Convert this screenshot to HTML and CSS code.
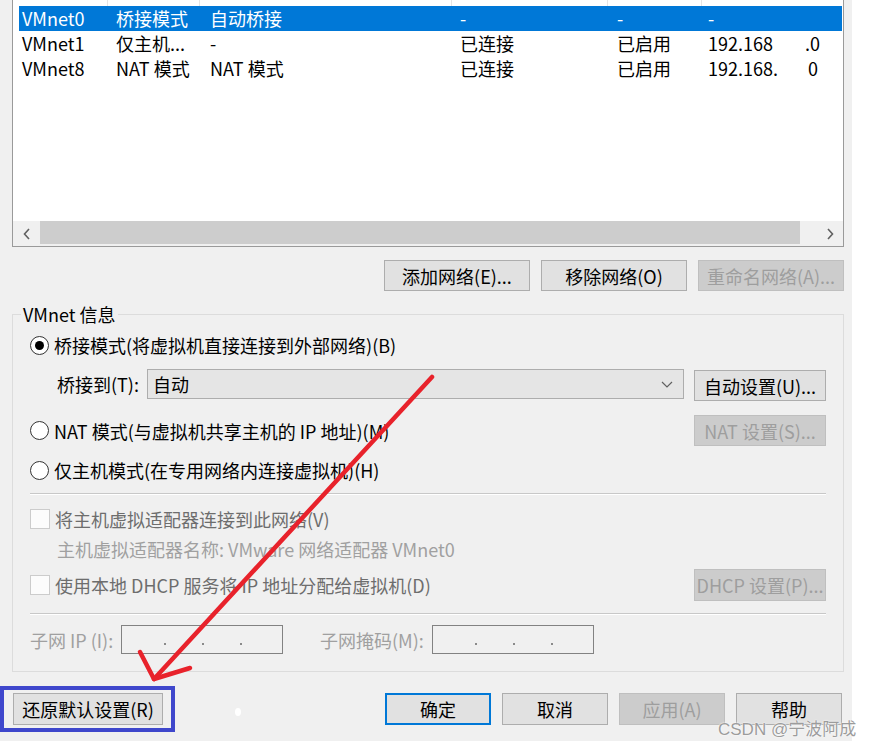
FILE: index.html
```html
<!DOCTYPE html>
<html lang="zh-CN">
<head>
  <meta charset="UTF-8">
  <title>虚拟网络编辑器</title>
  <link rel="stylesheet" href="styles.css">
</head>
<body>
<div class="page">
  <div class="dialog">

    <div class="list">
      <div class="list-head"><span></span><span></span><span></span><span></span><span></span><span></span></div>
      <div class="list-body">
        <div class="row sel"><span>VMnet0</span><span>桥接模式</span><span>自动桥接</span><span>-</span><span>-</span><span>-</span></div>
        <div class="row"><span>VMnet1</span><span>仅主机...</span><span>-</span><span>已连接</span><span>已启用</span><span>192.168<i class="ip-end">.0</i></span></div>
        <div class="row"><span>VMnet8</span><span>NAT 模式</span><span>NAT 模式</span><span>已连接</span><span>已启用</span><span>192.168.<i class="ip-end2">0</i></span></div>
      </div>
      <div class="hscroll">
        <span class="sb-arrow">
          <svg width="8" height="12" viewBox="0 0 8 12"><path d="M6 1 L1.5 6 L6 11" fill="none" stroke="#606060" stroke-width="1.6"/></svg>
        </span>
        <span class="sb-thumb"></span>
        <span class="sb-track"></span>
        <span class="sb-arrow">
          <svg width="8" height="12" viewBox="0 0 8 12"><path d="M2 1 L6.5 6 L2 11" fill="none" stroke="#606060" stroke-width="1.6"/></svg>
        </span>
      </div>
    </div>

    <div class="list-actions">
      <button class="btn wide">添加网络(E)...</button>
      <button class="btn wide">移除网络(O)</button>
      <button class="btn wide" disabled>重命名网络(A)...</button>
    </div>

    <fieldset class="group">
      <legend>VMnet 信息</legend>
      <div class="group-body">
        <div class="opt">
          <span class="radio on"></span>
          <span>桥接模式(将虚拟机直接连接到外部网络)(B)</span>
        </div>

        <div class="bridge">
          <span class="bridge-label">桥接到(T):</span>
          <div class="combo">
            <span>自动</span>
            <svg width="12" height="7" viewBox="0 0 12 7"><path d="M1 1 L6 6 L11 1" fill="none" stroke="#606060" stroke-width="1.2"/></svg>
          </div>
          <button class="btn side">自动设置(U)...</button>
        </div>

        <div class="opt nat">
          <span class="radio"></span>
          <span>NAT 模式(与虚拟机共享主机的 IP 地址)(M)</span>
          <button class="btn side push" disabled>NAT 设置(S)...</button>
        </div>

        <div class="opt host">
          <span class="radio"></span>
          <span>仅主机模式(在专用网络内连接虚拟机)(H)</span>
        </div>

        <div class="sep"></div>

        <div class="check">
          <span class="box"></span>
          <span>将主机虚拟适配器连接到此网络(V)</span>
        </div>
        <div class="adapter">主机虚拟适配器名称: VMware 网络适配器 VMnet0</div>

        <div class="check dhcp">
          <span class="box"></span>
          <span>使用本地 DHCP 服务将 IP 地址分配给虚拟机(D)</span>
          <button class="btn side push tall" disabled>DHCP 设置(P)...</button>
        </div>

        <div class="sep sep-low"></div>

        <div class="subnet">
          <span class="subnet-label">子网 IP (I):</span>
          <span class="ipbox"><i></i><i></i><i></i></span>
          <span class="subnet-label mask">子网掩码(M):</span>
          <span class="ipbox"><i></i><i></i><i></i></span>
        </div>
      </div>
    </fieldset>

    <div class="footer">
      <div class="mark">
        <button class="btn reset">还原默认设置(R)</button>
      </div>
      <div class="footer-right">
        <button class="btn foot default">确定</button>
        <button class="btn foot">取消</button>
        <button class="btn foot" disabled>应用(A)</button>
        <button class="btn foot">帮助</button>
      </div>
    </div>
  </div>

  <!-- red arrow drawn over the screenshot -->
  <svg class="annot" width="870" height="748" viewBox="0 0 870 748">
    <g fill="none" stroke="#e8222b" stroke-width="4.5" stroke-linecap="round" stroke-linejoin="round">
      <path d="M432 377 L154 679"/>
      <path d="M140 652 L154 679 L190 668"/>
    </g>
    <ellipse cx="238" cy="712" rx="3" ry="4" fill="#fff"/>
  </svg>

  <div class="watermark">CSDN @宁波阿成</div>
</div>
</body>
</html>
```

FILE: styles.css
```css
body {
  margin: 0;
  background: #fff;
  font-family: "Noto Sans CJK SC", sans-serif;
  font-size: 18px;
  color: #000;
}

.page {
  position: relative;
  width: 870px;
  height: 748px;
  overflow: hidden;
}

.dialog {
  width: 852px;
  height: 741px;
  background: #f0f0f0;
}

/* network list */
.list {
  margin: 0 8px 0 12px;
  background: #fff;
  border: 1px solid #9a9a9a;
  border-top: none;
}

.list-head,
.row {
  display: grid;
  grid-template-columns: 95px 92px 252px 156px 94px 1fr;
}

.list-head {
  height: 6px;
}

.list-head span {
  border-right: 1px solid #e5e5e5;
}

.list-head span:last-child {
  border-right: none;
}

.list-body {
  height: 215px;
}

.row {
  height: 25px;
  line-height: 25px;
  margin: 0 1px 0 6px;
  grid-template-columns: 89px 92px 252px 156px 94px 1fr;
  white-space: nowrap;
}

.row.sel {
  background: #0078d7;
  color: #fff;
}

.row span:nth-child(1) { padding-left: 3px; }
.row span:nth-child(2) { padding-left: 8px; }
.row span:nth-child(3) { padding-left: 10px; }
.row span:nth-child(4) { padding-left: 8px; }
.row span:nth-child(5) { padding-left: 9px; }
.row span:nth-child(6) { padding-left: 6px; }

.ip-end, .ip-end2 {
  font-style: normal;
}

.ip-end { margin-left: 32px; }
.ip-end2 { margin-left: 30px; }

.hscroll {
  display: flex;
  height: 25px;
  background: #f0f0f0;
}

.sb-arrow {
  width: 27px;
  display: flex;
  align-items: center;
  justify-content: center;
}

.sb-thumb {
  width: 760px;
  background: #cdcdcd;
  margin-bottom: 2px;
}

.sb-track {
  flex: 1;
}

/* buttons */
.btn {
  font: inherit;
  color: #000;
  background: #e1e1e1;
  border: 1px solid #adadad;
  padding: 0;
  height: 31px;
  line-height: 1;
  white-space: nowrap;
}

.btn:disabled {
  background: #cccccc;
  border-color: #bfbfbf;
  color: #9e9e9e;
}

.list-actions {
  display: flex;
  justify-content: flex-end;
  gap: 11px;
  margin: 13px 8px 0 12px;
}

.btn.wide {
  width: 146px;
}

/* VMnet info group */
.group {
  margin: 12px 8px 0 12px;
  padding: 0;
  border: 1px solid #dcdcdc;
  min-width: 0;
}

.group legend {
  margin-left: 8px;
  padding: 0 2px;
  line-height: 22px;
}

.group-body {
  padding: 6px 17px 17px 17px;
}

.opt, .check {
  display: flex;
  align-items: center;
  gap: 5px;
  height: 28px;
}

.radio {
  width: 17px;
  height: 17px;
  border: 1px solid #333;
  border-radius: 50%;
  background: #fff;
  display: flex;
  align-items: center;
  justify-content: center;
  flex: none;
}

.radio.on::after {
  content: "";
  width: 9px;
  height: 9px;
  border-radius: 50%;
  background: #000;
}

.bridge {
  display: flex;
  align-items: flex-start;
  margin-top: 10px;
  height: 32px;
}

.bridge-label {
  margin-left: 27px;
  width: 90px;
  line-height: 30px;
}

.combo {
  flex: 1;
  height: 28px;
  background: #e5e5e5;
  border: 1px solid #adadad;
  display: flex;
  align-items: center;
  justify-content: space-between;
  padding: 0 10px 0 5px;
}

.btn.side {
  width: 132px;
  margin-left: 10px;
  margin-top: 1px;
}

.opt.nat {
  height: 31px;
  margin-top: 14px;
}

.btn.push {
  margin-left: auto;
  margin-top: 0;
}

.opt.host {
  margin-top: 10px;
}

.sep {
  margin-top: 9px;
  border-top: 1px solid #c8c8c8;
  border-bottom: 1px solid #fff;
}

.check {
  margin-top: 10px;
  color: #6d6d6d;
}

.box {
  width: 18px;
  height: 18px;
  border: 1px solid #cccccc;
  background: #fcfcfc;
  flex: none;
}

.adapter {
  margin: 4px 0 0 27px;
  line-height: 24px;
  color: #a0a0a0;
}

.check.dhcp {
  height: 32px;
  margin-top: 8px;
}

.btn.tall {
  height: 32px;
}

.sep-low {
  margin-top: 12px;
}

.subnet {
  display: flex;
  align-items: center;
  margin-top: 10px;
  color: #a0a0a0;
}

.subnet-label {
  width: 91px;
}

.subnet-label.mask {
  width: 112px;
  margin-left: 37px;
}

.ipbox {
  width: 160px;
  height: 27px;
  border: 1px solid #828282;
  background: #f0f0f0;
  display: flex;
  gap: 36px;
  padding-left: 42px;
  box-sizing: content-box;
  width: 118px;
  align-items: flex-end;
  padding-bottom: 0;
}

.ipbox i {
  width: 2px;
  height: 2px;
  background: #8a8a8a;
  margin-bottom: 8px;
}

/* bottom buttons */
.footer {
  display: flex;
  align-items: center;
  margin-top: 14px;
  height: 46px;
}

.mark {
  width: 167px;
  height: 38px;
  border: 4px solid #3f47cc;
  display: flex;
  align-items: center;
  padding-left: 9px;
  box-sizing: content-box;
  width: 158px;
}

.btn.reset {
  width: 150px;
  height: 32px;
}

.footer-right {
  margin-left: auto;
  margin-right: 10px;
  display: flex;
  gap: 11px;
}

.btn.foot {
  width: 106px;
  height: 32px;
}

.btn.default {
  border: 2px solid #0078d7;
}

/* overlays */
.annot {
  position: absolute;
  left: 0;
  top: 0;
  pointer-events: none;
}

.watermark {
  position: absolute;
  left: 718px;
  top: 718px;
  font-family: "Liberation Sans", "Noto Sans CJK SC", sans-serif;
  font-size: 17px;
  line-height: 24px;
  color: #9c9c9c;
  text-shadow: 0 0 2px #fff, 0 0 1px #fff;
  white-space: nowrap;
}
```
